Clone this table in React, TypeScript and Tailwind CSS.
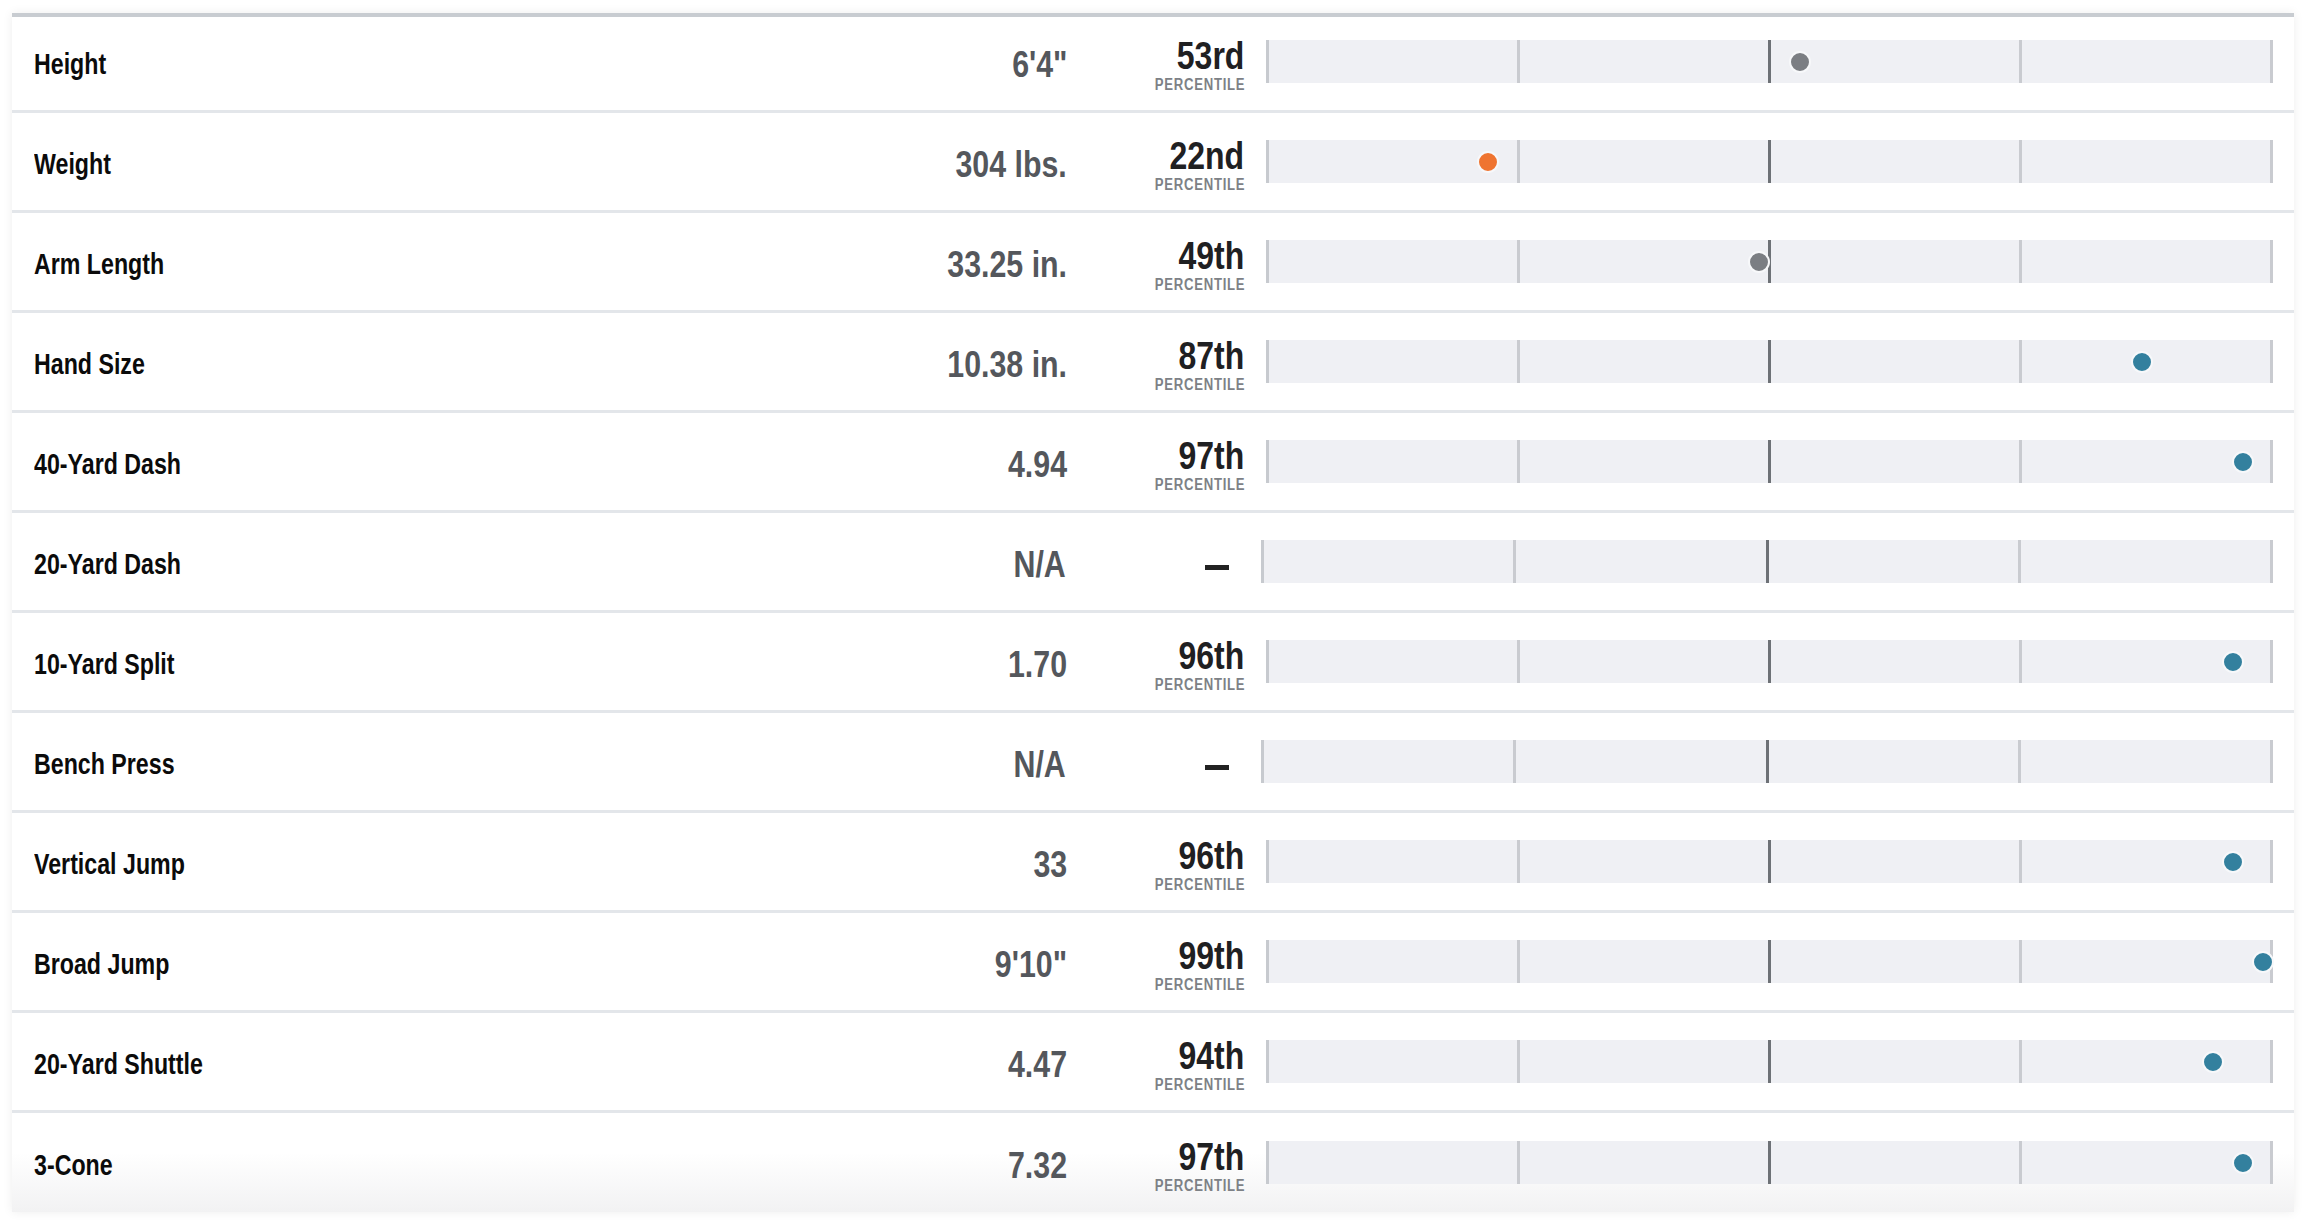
import React from "react";

type Row = { label: string; value: string; pct: number | null; suffix?: string };

const rows: Row[] = [
  { label: "Height", value: "6'4\"", pct: 53, suffix: "rd" },
  { label: "Weight", value: "304 lbs.", pct: 22, suffix: "nd" },
  { label: "Arm Length", value: "33.25 in.", pct: 49, suffix: "th" },
  { label: "Hand Size", value: "10.38 in.", pct: 87, suffix: "th" },
  { label: "40-Yard Dash", value: "4.94", pct: 97, suffix: "th" },
  { label: "20-Yard Dash", value: "N/A", pct: null },
  { label: "10-Yard Split", value: "1.70", pct: 96, suffix: "th" },
  { label: "Bench Press", value: "N/A", pct: null },
  { label: "Vertical Jump", value: "33", pct: 96, suffix: "th" },
  { label: "Broad Jump", value: "9'10\"", pct: 99, suffix: "th" },
  { label: "20-Yard Shuttle", value: "4.47", pct: 94, suffix: "th" },
  { label: "3-Cone", value: "7.32", pct: 97, suffix: "th" },
];

function dotColor(p: number) {
  if (p < 30) return "bg-[#ef7430]";
  if (p <= 70) return "bg-[#7b7e83]";
  return "bg-[#33809e]";
}

function Bar({ pct, wide }: { pct: number | null; wide?: boolean }) {
  return (
    <div
      className={
        "relative h-[43px] shrink-0 border-l-[3px] border-[#c7cacf] bg-[#eff0f4] " +
        (wide ? "ml-[18px] w-[1012px]" : "ml-[22px] w-[1007px]")
      }
    >
      <div className="grid h-full grid-cols-4">
        <div className="border-r-[3px] border-[#c9cbd0]" />
        <div className="border-r-[3px] border-[#6d7176]" />
        <div className="border-r-[3px] border-[#c9cbd0]" />
        <div className="border-r-[3px] border-[#c9cbd0]" />
      </div>
      {pct !== null && (
        <div
          className={
            "absolute top-1/2 h-[22px] w-[22px] -translate-y-1/2 rounded-full border-2 border-[#f7f8fa] " +
            dotColor(pct)
          }
          style={{ left: `${(pct / 100) * 1007 - 3 - 11}px` }}
        />
      )}
    </div>
  );
}

export default function App() {
  return (
    <div className="min-h-screen bg-white font-['Liberation_Sans','Arial',sans-serif]">
      <div className="pl-[12px] pt-[13px]">
        <div className="relative w-[2282px] bg-white shadow-[0_0_10px_rgba(0,0,0,0.07)]">
          <div className="absolute left-0 right-0 top-0 z-10 h-[4px] bg-[#c8ccd1]" />
          {rows.map((r, i) => {
            const last = i === rows.length - 1;
            return (
              <div
                key={r.label}
                className={
                  "flex items-center " +
                  (last
                    ? "h-[99px] bg-gradient-to-b from-white from-40% to-[#f2f2f3]"
                    : "h-[100px] border-b-[3px] border-[#e3e6ea]")
                }
              >
                <div className="flex-1 pl-[22px] pt-[5px] text-[29px] font-bold leading-[32px] text-[#0b0b0b]">
                  <span className="inline-block origin-left scale-x-[0.8] whitespace-nowrap">{r.label}</span>
                </div>
                <div className="shrink-0 pt-[5px] text-right text-[37px] font-bold leading-[37px] text-[#54575c]">
                  <span className="inline-block origin-right scale-x-[0.82] whitespace-nowrap">{r.value}</span>
                </div>
                {r.pct !== null ? (
                  <>
                    <div className="ml-[57px] mt-[8px] flex w-[120px] shrink-0 flex-col items-end">
                      <div className="text-[39px] font-bold leading-[34px] text-[#1f2022]">
                        <span className="inline-block origin-right scale-x-[0.82] whitespace-nowrap">
                          {r.pct}
                          {r.suffix}
                        </span>
                      </div>
                      <div className="mt-[4px] text-[16px] font-bold leading-[16px] text-[#7d8186]">
                        <span className="inline-block origin-right scale-x-[0.82] whitespace-nowrap tracking-[0.9px] -mr-[0.9px]">
                          PERCENTILE
                        </span>
                      </div>
                    </div>
                    <Bar pct={r.pct} />
                  </>
                ) : (
                  <>
                    <div className="ml-[57px] mt-[11px] flex w-[120px] shrink-0 justify-end pr-[14px]">
                      <div className="h-[5px] w-[24px] bg-[#222]" aria-label="—" />
                    </div>
                    <Bar pct={null} wide />
                  </>
                )}
                <div className="w-[21px] shrink-0" />
              </div>
            );
          })}
        </div>
      </div>
    </div>
  );
}
